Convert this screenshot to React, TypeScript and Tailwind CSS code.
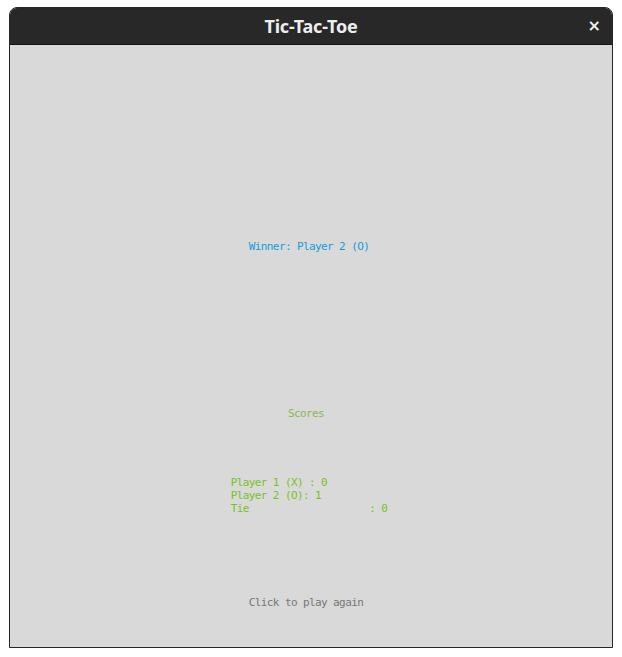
import React from "react";

const mono = { fontFamily: '"DejaVu Sans Mono", "Liberation Mono", monospace' };

export default function App() {
  return (
    <div className="w-[622px] h-[657px] bg-white overflow-hidden">
      <div className="ml-[9px] mt-[7px] w-[604px] h-[641px] flex flex-col rounded-t-[8px] border border-[#262626] bg-[#d9d9d9] overflow-hidden">
        <div className="relative h-[37px] shrink-0 bg-[#282828] border-b border-[#141414] flex items-center justify-center">
          <span
            className="text-[18px] font-bold text-[#eeeeee] tracking-[-0.2px]"
            style={{ fontFamily: '"Noto Sans", "Open Sans", sans-serif' }}
          >
            Tic-Tac-Toe
          </span>
          <span
            className="absolute right-[11px] top-[8px] text-[16px] font-bold text-[#f0f0f0] leading-[20px]"
            style={{ fontFamily: '"DejaVu Sans", sans-serif' }}
          >
            ×
          </span>
        </div>
        <div className="flex-1 flex flex-col items-center text-[11px] leading-[13px] tracking-[-0.6px]" style={mono}>
          <div className="mt-[195px] mr-[4px] text-[#119ddb] whitespace-pre">Winner: Player 2 (O)</div>
          <div className="mt-[154px] mr-[10px] text-[#86b84e] whitespace-pre">Scores</div>
          <div className="mt-[56px] mr-[4px] text-[#78c220] whitespace-pre flex flex-col items-start">
            <div>Player 1 (X) : 0</div>
            <div>Player 2 (O): 1</div>
            <div>{"Tie                    : 0"}</div>
          </div>
          <div className="mt-[81px] mr-[10px] text-[#777777] whitespace-pre">Click to play again</div>
        </div>
      </div>
    </div>
  );
}
